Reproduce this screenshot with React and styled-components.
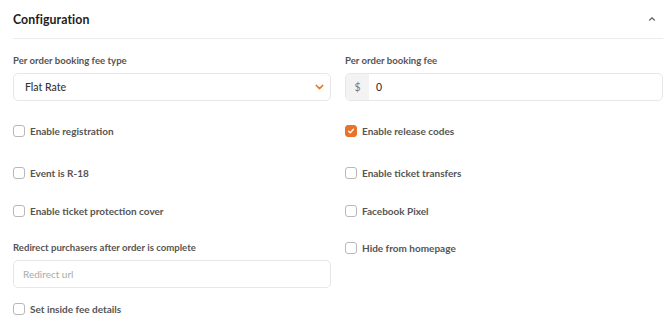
import React, { useState } from 'react';
import styled, { createGlobalStyle } from 'styled-components';

const GlobalStyle = createGlobalStyle`
    body {
        margin: 0;
        background: #fff;
        font-family: Lato, "Noto Sans", sans-serif;
    }
`

const ChevronUp = () => (
    <svg width='8' height='6' viewBox='0 0 8 6' fill='none'>
        <path d='M1.5 4.2L4 1.8L6.5 4.2' stroke='#666' strokeWidth='1.2' strokeLinecap='round' strokeLinejoin='round' />
    </svg>
)

const ChevronDown = () => (
    <svg width='9' height='6' viewBox='0 0 9 6' fill='none'>
        <path d='M1.2 1.4L4.5 4.6L7.8 1.4' stroke='#e8772e' strokeWidth='1.5' strokeLinecap='round' strokeLinejoin='round' />
    </svg>
)

const Check = () => (
    <svg width='8' height='8' viewBox='0 0 8 8' fill='none'>
        <path d='M1.6 4.2L3.3 5.8L6.5 2.2' stroke='#fff' strokeWidth='1.3' strokeLinecap='round' strokeLinejoin='round' />
    </svg>
)

const CheckItem = ({ label, checked, onToggle }) => (
    <CheckRow onClick={onToggle}>
        <Box $checked={checked}>{checked && <Check />}</Box>
        <CheckLabel>{label}</CheckLabel>
    </CheckRow>
)

const App = () => {

    const [checks, setChecks] = useState({ release: true });

    const toggle = key => () => setChecks({ ...checks, [key]: !checks[key] });

    const item = (key, label) => (
        <CheckItem label={label} checked={!!checks[key]} onToggle={toggle(key)} />
    )

    return (
        <>
            <GlobalStyle />
            <Panel>
                <Header>
                    <Title>Configuration</Title>
                    <ChevronUp />
                </Header>
                <Row $top={15}>
                    <Field>
                        <Label>Per order booking fee type</Label>
                        <Select>
                            <span>Flat Rate</span>
                            <ChevronDown />
                        </Select>
                    </Field>
                    <Field>
                        <Label>Per order booking fee</Label>
                        <InputGroup>
                            <Addon>$</Addon>
                            <Value>0</Value>
                        </InputGroup>
                    </Field>
                </Row>
                <Row $top={18}>
                    {item('registration', 'Enable registration')}
                    {item('release', 'Enable release codes')}
                </Row>
                <Row $top={18}>
                    {item('r18', 'Event is R-18')}
                    {item('transfers', 'Enable ticket transfers')}
                </Row>
                <Row $top={14}>
                    {item('protection', 'Enable ticket protection cover')}
                    {item('pixel', 'Facebook Pixel')}
                </Row>
                <Row $top={13}>
                    <Column>
                        <Field $pad={5}>
                            <Label>Redirect purchasers after order is complete</Label>
                            <TextInput placeholder='Redirect url' />
                        </Field>
                        <Spacer />
                        {item('inside', 'Set inside fee details')}
                    </Column>
                    {item('homepage', 'Hide from homepage')}
                </Row>
            </Panel>
        </>
    )
}

const Panel = styled.div`
    width: 650px;
    padding: 0 7px 0 13px;
`

const Header = styled.div`
    height: 38px;
    display: flex;
    align-items: center;
    justify-content: space-between;
    padding-right: 7px;
    border-bottom: 1px solid #ececec;
`

const Title = styled.h3`
    margin: 0;
    font-size: 12.3px;
    font-weight: 700;
    color: #1c1c1c;
    letter-spacing: 0.1px;
`

const Row = styled.div`
    display: grid;
    grid-template-columns: 318px 318px;
    column-gap: 14px;
    align-items: start;
    margin-top: ${p => p.$top}px;
`

const Column = styled.div`
    display: flex;
    flex-direction: column;
`

const Spacer = styled.div`
    height: 9px;
`

const Field = styled.div`
    display: flex;
    flex-direction: column;
    padding-top: ${p => p.$pad || 0}px;
`

const Label = styled.label`
    font-size: 9.6px;
    line-height: 14px;
    font-weight: 700;
    color: #555;
    margin-bottom: 5px;
`

const Select = styled.div`
    height: 28px;
    box-sizing: border-box;
    border: 1px solid #e7e7e7;
    border-radius: 5px;
    display: flex;
    align-items: center;
    justify-content: space-between;
    padding: 0 6px 0 11px;
    font-size: 10.5px;
    font-weight: 500;
    color: #333;
`

const InputGroup = styled.div`
    height: 28px;
    box-sizing: border-box;
    border: 1px solid #e7e7e7;
    border-radius: 5px;
    display: flex;
    overflow: hidden;
`

const Addon = styled.div`
    width: 23px;
    background: #f3f3f3;
    display: flex;
    align-items: center;
    justify-content: center;
    font-size: 10.5px;
    color: #777;
`

const Value = styled.div`
    display: flex;
    align-items: center;
    padding-left: 7px;
    font-size: 10.5px;
    font-weight: 500;
    color: #333;
`

const TextInput = styled.input`
    height: 28px;
    box-sizing: border-box;
    border: 1px solid #e7e7e7;
    border-radius: 5px;
    padding: 0 9px;
    font-family: inherit;
    font-size: 10px;
    outline: none;

    &::placeholder {
        color: #aaa;
    }
`

const CheckRow = styled.div`
    height: 24px;
    display: flex;
    align-items: center;
    gap: 5px;
    cursor: pointer;
`

const Box = styled.span`
    width: 12px;
    height: 12px;
    box-sizing: border-box;
    border-radius: 3px;
    border: 1px solid ${p => (p.$checked ? '#e8742c' : '#b9b9b9')};
    background: ${p => (p.$checked ? '#e8742c' : '#fff')};
    display: flex;
    align-items: center;
    justify-content: center;
`

const CheckLabel = styled.span`
    font-size: 10px;
    font-weight: 700;
    color: #555;
`

export default App;
